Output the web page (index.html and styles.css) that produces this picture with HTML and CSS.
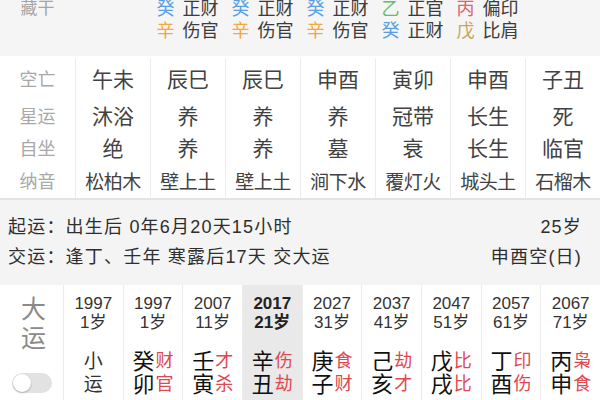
FILE: index.html
```html
<!DOCTYPE html>
<html lang="zh">
<head>
<meta charset="utf-8">
<link rel="stylesheet" href="styles.css">
</head>
<body>
<div class="page">
  <section class="cg">
    <div class="cg-label">藏干</div>
    <div class="cg-cell"></div>
    <div class="cg-cell"><p><span class="s water">癸</span>正财</p><p><span class="s metal">辛</span>伤官</p></div>
    <div class="cg-cell"><p><span class="s water">癸</span>正财</p><p><span class="s metal">辛</span>伤官</p></div>
    <div class="cg-cell"><p><span class="s water">癸</span>正财</p><p><span class="s metal">辛</span>伤官</p></div>
    <div class="cg-cell"><p><span class="s wood">乙</span>正官</p><p><span class="s water">癸</span>正财</p></div>
    <div class="cg-cell"><p><span class="s fire">丙</span>偏印</p><p><span class="s earth">戊</span>比肩</p></div>
    <div class="cg-cell"></div>
  </section>

  <section class="tbl">
    <div class="lbl">空亡</div>
    <div class="val">午未</div><div class="val">辰巳</div><div class="val">辰巳</div><div class="val">申酉</div><div class="val">寅卯</div><div class="val">申酉</div><div class="val">子丑</div>
    <div class="lbl">星运</div>
    <div class="val">沐浴</div><div class="val">养</div><div class="val">养</div><div class="val">养</div><div class="val">冠带</div><div class="val">长生</div><div class="val">死</div>
    <div class="lbl">自坐</div>
    <div class="val">绝</div><div class="val">养</div><div class="val">养</div><div class="val">墓</div><div class="val">衰</div><div class="val">长生</div><div class="val">临官</div>
    <div class="lbl">纳音</div>
    <div class="val sm">松柏木</div><div class="val sm">壁上土</div><div class="val sm">壁上土</div><div class="val sm">涧下水</div><div class="val sm">覆灯火</div><div class="val sm">城头土</div><div class="val sm">石榴木</div>
  </section>

  <section class="qy">
    <div class="qy-row"><span>起运：出生后 0年6月20天15小时</span><span>25岁</span></div>
    <div class="qy-row"><span>交运：逢丁、壬年 寒露后17天 交大运</span><span>申酉空(日)</span></div>
  </section>

  <section class="dy">
    <div class="dy-label">
      <div class="dy-title">大<br>运</div>
      <div class="switch"><span class="knob"></span></div>
    </div>
    <div class="dy-col"><div class="yr">1997</div><div class="yr">1岁</div><div class="xy">小<br>运</div></div>
    <div class="dy-col"><div class="yr">1997</div><div class="yr">1岁</div><div class="gz"><span class="g">癸</span><span class="ss">财</span></div><div class="gz"><span class="g">卯</span><span class="ss">官</span></div></div>
    <div class="dy-col"><div class="yr">2007</div><div class="yr">11岁</div><div class="gz"><span class="g">壬</span><span class="ss">才</span></div><div class="gz"><span class="g">寅</span><span class="ss">杀</span></div></div>
    <div class="dy-col cur"><div class="yr">2017</div><div class="yr">21岁</div><div class="gz"><span class="g">辛</span><span class="ss">伤</span></div><div class="gz"><span class="g">丑</span><span class="ss">劫</span></div></div>
    <div class="dy-col"><div class="yr">2027</div><div class="yr">31岁</div><div class="gz"><span class="g">庚</span><span class="ss">食</span></div><div class="gz"><span class="g">子</span><span class="ss">财</span></div></div>
    <div class="dy-col"><div class="yr">2037</div><div class="yr">41岁</div><div class="gz"><span class="g">己</span><span class="ss">劫</span></div><div class="gz"><span class="g">亥</span><span class="ss">才</span></div></div>
    <div class="dy-col"><div class="yr">2047</div><div class="yr">51岁</div><div class="gz"><span class="g">戊</span><span class="ss">比</span></div><div class="gz"><span class="g">戌</span><span class="ss">比</span></div></div>
    <div class="dy-col"><div class="yr">2057</div><div class="yr">61岁</div><div class="gz"><span class="g">丁</span><span class="ss">印</span></div><div class="gz"><span class="g">酉</span><span class="ss">伤</span></div></div>
    <div class="dy-col"><div class="yr">2067</div><div class="yr">71岁</div><div class="gz"><span class="g">丙</span><span class="ss">枭</span></div><div class="gz"><span class="g">申</span><span class="ss">食</span></div></div>
  </section>
</div>
</body>
</html>
```

FILE: styles.css
```css
* { box-sizing: border-box; }
html, body { margin: 0; padding: 0; }
body {
  width: 600px;
  height: 400px;
  overflow: hidden;
  background: #fff;
  font-family: "Liberation Sans", "Noto Sans CJK SC", sans-serif;
  color: #333;
}
p { margin: 0; }

/* 藏干 */
.cg {
  display: grid;
  grid-template-columns: repeat(8, 75px);
  height: 56px;
  background: #f5f5f5;
  font-size: 18px;
  line-height: 22px;
}
.cg-label, .cg-cell { margin-top: -2px; }
.cg-label { text-align: center; color: #a5a5a5; font-size: 17px; }
.cg-cell { text-align: center; color: #3c3c3c; }
.s { margin-right: 8px; }
.water { color: #5a9fe3; }
.metal { color: #f2a93b; }
.wood { color: #5fc063; }
.fire { color: #e0626f; }
.earth { color: #c9a65a; }

/* table rows */
.tbl {
  display: grid;
  grid-template-columns: repeat(8, 75px);
  grid-template-rows: 40px 34px 30px 36px;
  padding-top: 2px;
  height: 142px;
  background: #fff;
}
.lbl {
  display: flex; align-items: center; justify-content: center;
  color: #a8a8a8; font-size: 18px;
}
.val {
  display: flex; align-items: center; justify-content: center;
  border-left: 1px solid #ececec;
  color: #424242; font-size: 21px;
}
.val.sm { font-size: 19px; letter-spacing: -0.5px; }

/* 起运 */
.qy {
  border-top: 2px solid #e3e3e3;
  background: #f4f4f4;
  height: 87px;
  padding: 12px 18px 0 8px;
  font-size: 18px;
  letter-spacing: 1.2px;
  color: #2e2e2e;
}
.qy-row {
  display: flex; justify-content: space-between;
  line-height: 30px;
}

/* 大运 */
.dy {
  display: grid;
  grid-template-columns: 63px repeat(9, 1fr);
  height: 115px;
  background: #fff;
}
.dy-label {
  display: flex; flex-direction: column; align-items: center;
  padding-top: 10px;
}
.dy-title {
  font-size: 25px; line-height: 29px; color: #8a8a8a;
  margin-left: 4px;
}
.switch {
  margin-top: 20px;
  width: 40px; height: 20px; border-radius: 10px;
  background: #e2e2e2;
  position: relative;
}
.knob {
  position: absolute; left: 1px; top: 1px;
  width: 18px; height: 18px; border-radius: 50%;
  background: #fff;
  box-shadow: 0 1px 2px rgba(0,0,0,0.25);
}
.dy-col {
  border-left: 1px solid #ececec;
  padding-top: 9px;
  display: flex; flex-direction: column; align-items: center;
}
.dy-col.cur { background: #e9e9e9; }
.dy-col.cur .yr { font-weight: bold; color: #222; }
.yr { font-size: 17px; line-height: 19px; color: #333; }
.yr + .yr { margin-bottom: 18px; }
.xy { font-size: 19px; line-height: 23px; text-align: center; color: #333; }
.gz { display: flex; align-items: center; height: 23px; }
.g { display: block; font-size: 22px; line-height: 23px; color: #111; }
.ss { display: block; font-size: 18px; line-height: 23px; color: #e0474f; margin-left: 1px; }
```
